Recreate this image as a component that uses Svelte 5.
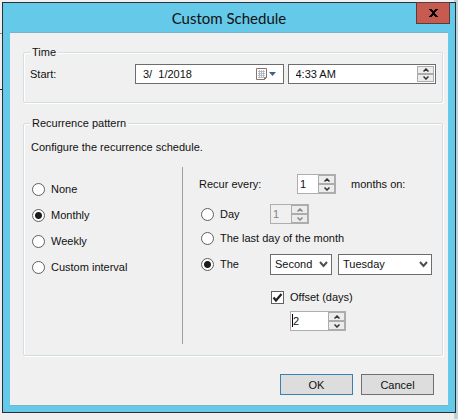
<script>
  let pattern = $state('Monthly');
  let rule = $state('the');
  let startDate = $state('3/  1/2018');
  let startTime = $state('4:33 AM');
  let months = $state('1');
  let day = $state('1');
  let offset = $state('2');
  let useOffset = $state(true);
  let week = $state('Second');
  let weekday = $state('Tuesday');

  const patterns = ['None', 'Monthly', 'Weekly', 'Custom interval'];
  const weeks = ['First', 'Second', 'Third', 'Fourth', 'Last'];
  const weekdays = ['Sunday', 'Monday', 'Tuesday', 'Wednesday', 'Thursday', 'Friday', 'Saturday'];

  const step = (value, by) => String(Math.max(0, Number(value) + by));
</script>

{#snippet arrows(up, down, disabled)}
  <span class="arrows">
    <button type="button" aria-label="Increase" {disabled} onclick={up}>
      <svg width="6" height="4" viewBox="0 0 6 4"><path d="M.5 3.5 3 1l2.500 2.500" /></svg>
    </button>
    <button type="button" aria-label="Decrease" {disabled} onclick={down}>
      <svg width="6" height="4" viewBox="0 0 6 4"><path d="M.5 .5 3 3 5.500 .5" /></svg>
    </button>
  </span>
{/snippet}

{#snippet chevron()}
  <svg class="chevron" width="9" height="7" viewBox="0 0 9 7"><path d="M1 1 4.500 5 8 1" /></svg>
{/snippet}

<main class="desktop">
  <div class="dialog" role="dialog" aria-labelledby="title">
    <header>
      <h1 id="title">Custom Schedule</h1>
      <button class="close" type="button" aria-label="Close">
        <svg width="9" height="8" viewBox="0 0 9 8"><path d="M0 0h3v1h1v1h1V1h1V0h3v1H8v1H7v1H6v2h1v1h1v1h1v1H6V7H5V6H4v1H3v1H0V7h1V6h1V5h1V3H2V2H1V1H0z" /></svg>
      </button>
    </header>

    <form class="client" onsubmit={(e) => e.preventDefault()}>
      <fieldset>
        <legend>Time</legend>
        <div class="time">
          <label for="start">Start:</label>
          <div class="field">
            <input id="start" type="text" bind:value={startDate} />
            <button class="calendar" type="button" aria-label="Open calendar">
              <svg width="20" height="12" viewBox="0 0 20 12">
                <path d="M.5.5h10v9l-2 2h-8z" fill="#fff" stroke="#85736f" />
                <path d="M2 3.500h7M2 5.500h7M2 7.500h7M2 9.500h5M3.500 2v8M5.500 2v8M7.500 2v8" stroke="#a9b0bb" stroke-width=".8" />
                <path d="M8.500 11.500v-2h2" fill="none" stroke="#85736f" />
                <path d="M13 4h7l-3.500 4z" fill="#405e8d" />
              </svg>
            </button>
          </div>
          <div class="field">
            <input type="text" aria-label="Start time" bind:value={startTime} />
            {@render arrows()}
          </div>
        </div>
      </fieldset>

      <fieldset class="recurrence">
        <legend>Recurrence pattern</legend>
        <p>Configure the recurrence schedule.</p>
        <div class="panels">
          <div class="patterns">
            {#each patterns as name}
              <label><input type="radio" name="pattern" value={name} bind:group={pattern} />{name}</label>
            {/each}
          </div>

          <div class="details">
            <div class="row">
              <label class="every" for="months">Recur every:</label>
              <span class="spinner">
                <input id="months" type="text" bind:value={months} />
                {@render arrows(() => (months = step(months, 1)), () => (months = step(months, -1)))}
              </span>
              <span class="unit">months on:</span>
            </div>
            <div class="row day">
              <label class="choice"><input type="radio" name="rule" value="day" bind:group={rule} />Day</label>
              <span class="spinner" class:off={rule !== 'day'}>
                <input type="text" aria-label="Day of the month" disabled={rule !== 'day'} bind:value={day} />
                {@render arrows(() => (day = step(day, 1)), () => (day = step(day, -1)), rule !== 'day')}
              </span>
            </div>
            <div class="row last">
              <label><input type="radio" name="rule" value="last" bind:group={rule} />The last day of the month</label>
            </div>
            <div class="row the">
              <label class="choice"><input type="radio" name="rule" value="the" bind:group={rule} />The</label>
              <span class="combo week">
                <select aria-label="Week" bind:value={week}>
                  {#each weeks as name}<option>{name}</option>{/each}
                </select>
                {@render chevron()}
              </span>
              <span class="combo weekday">
                <select aria-label="Weekday" bind:value={weekday}>
                  {#each weekdays as name}<option>{name}</option>{/each}
                </select>
                {@render chevron()}
              </span>
            </div>
            <div class="offset">
              <label class="check"><input type="checkbox" bind:checked={useOffset} />Offset (days)</label>
              <span class="spinner wide">
                <input type="text" aria-label="Offset in days" bind:value={offset} />
                <i class="caret"></i>
                {@render arrows(() => (offset = step(offset, 1)), () => (offset = step(offset, -1)))}
              </span>
            </div>
          </div>
        </div>
      </fieldset>

      <footer>
        <button class="default" type="submit">OK</button>
        <button type="button">Cancel</button>
      </footer>
    </form>
  </div>
</main>

<style>
  :global(body) {
    background: #efefef;
  }

  .desktop {
    padding: 2px 2px 6px;
    background:
      linear-gradient(#bfd3d8, #bfd3d8) right / 4px 100% no-repeat,
      linear-gradient(#8c8c8c, #8c8c8c) 0 33px / 2px 1px no-repeat,
      linear-gradient(#222, #222) 0 89px / 2px 1px no-repeat;
    font: 11px/16px "Liberation Sans", Arial, sans-serif;
    color: #111;
  }

  .dialog {
    border: 1px solid #2b2f33;
    background: #65c9ea;
    padding: 0 7px 6px;
  }

  header {
    position: relative;
    height: 29px;
  }

  h1 {
    margin: 0;
    text-align: center;
    font: 15px/30px Lato, "Open Sans", sans-serif;
  }

  .close {
    position: absolute;
    top: -1px;
    right: -2px;
    width: 34px;
    height: 22px;
    padding: 0;
    border: 1px solid #5a3a3f;
    background: #c75b50;
    display: grid;
    place-items: center;
  }

  .client {
    border: solid #7ab4c9;
    border-width: 1px 0;
    background: #f0f0f0;
    padding: 11px 5px 10px 13px;
  }

  fieldset {
    margin: 0;
    min-width: 0;
    padding: 4px 6px 18px;
    border: 1px solid #d3dde4;
    border-radius: 2px;
    box-shadow: 1px 1px #fff, inset 1px 1px #fff;
  }

  legend {
    padding: 0 2px;
    background: #f0f0f0;
  }

  .recurrence {
    margin-top: 12px;
    padding: 8px 6px 11px;
  }

  p {
    margin: 0 0 12px 1px;
  }

  input,
  select,
  button {
    font: inherit;
    color: inherit;
    box-sizing: border-box;
  }

  input[type='text'] {
    flex: 1;
    min-width: 0;
    height: 100%;
    padding: 0;
    border: 0;
    outline: 0;
    background: transparent;
    white-space: pre;
  }

  .time {
    display: grid;
    grid-template-columns: 101px minmax(0, 1fr) minmax(0, 1fr);
    column-gap: 4px;
    align-items: center;
  }

  .field {
    display: flex;
    align-items: center;
    box-sizing: border-box;
    height: 20px;
    padding: 1px 1px 1px 7px;
    border: 1px solid #6d6d6d;
    background: #fff;
  }

  .calendar {
    display: grid;
    padding: 0 6px 0 0;
    border: 0;
    background: none;
  }

  .arrows {
    display: flex;
    flex-direction: column;
    flex: none;
    width: 17px;
    height: 100%;
  }

  .arrows button {
    flex: 1;
    min-height: 0;
    padding: 0;
    border: 1px solid #acacac;
    background: #ececec;
    display: grid;
    place-items: center;
  }

  .arrows path {
    fill: none;
    stroke: #333;
    stroke-width: 1.5;
  }

  .off .arrows path {
    stroke: #888;
  }

  .panels {
    display: grid;
    grid-template-columns: 153px 1fr;
    min-height: 177px;
  }

  .patterns {
    display: flex;
    flex-direction: column;
    gap: 10px;
    padding: 14px 0 0 2px;
    border-right: 1px solid #a0a0a0;
  }

  .patterns label,
  .row label,
  .check {
    display: flex;
    align-items: center;
    gap: 6px;
    white-space: nowrap;
  }

  input[type='radio'] {
    appearance: none;
    width: 13px;
    height: 13px;
    margin: 0;
    border: 1px solid #606060;
    border-radius: 50%;
    background: #fff;
  }

  input[type='radio']:checked {
    background: radial-gradient(circle, #1c1c1c 3px, #fff 4px);
  }

  .details {
    padding: 7px 0 0 16px;
  }

  .row {
    display: flex;
    align-items: center;
    height: 20px;
  }

  .every {
    width: 98px;
  }

  .unit {
    margin-left: 15px;
  }

  .day {
    margin-top: 10px;
  }

  .last {
    margin-top: 4px;
  }

  .the {
    height: 22px;
    margin-top: 5px;
  }

  .day,
  .last,
  .the {
    padding-left: 2px;
  }

  .choice {
    width: 69px;
  }

  .spinner {
    position: relative;
    display: flex;
    box-sizing: border-box;
    width: 39px;
    height: 20px;
    padding-left: 2px;
    border: 1px solid #adadb3;
    background: #fff;
  }

  .off {
    background: #f0f0f0;
    color: #838383;
  }

  .wide {
    width: 56px;
    margin-left: 19px;
  }

  .caret {
    position: absolute;
    left: 1px;
    top: 2px;
    width: 1px;
    height: 13px;
    background: #000;
  }

  .combo {
    position: relative;
    display: block;
  }

  .week {
    width: 62px;
    margin-right: 6px;
  }

  .weekday {
    width: 94px;
  }

  select {
    appearance: none;
    display: block;
    width: 100%;
    height: 21px;
    padding: 0 0 0 4px;
    border: 1px solid #6d6d6d;
    border-radius: 0;
    background: #fff;
  }

  .chevron {
    position: absolute;
    right: 4px;
    top: 7px;
    pointer-events: none;
  }

  .chevron path {
    fill: none;
    stroke: #505050;
    stroke-width: 2;
  }

  .offset {
    display: flex;
    flex-direction: column;
    gap: 6px;
    margin: 14px 0 0 72px;
  }

  input[type='checkbox'] {
    appearance: none;
    width: 13px;
    height: 13px;
    margin: 0;
    border: 1px solid #606060;
    background: #fff;
  }

  input[type='checkbox']:checked {
    background: #fff url("data:image/svg+xml,%3Csvg xmlns='http://www.w3.org/2000/svg' viewBox='0 0 11 11'%3E%3Cpath d='M1.500 5.500 4 8.500 9.500 2' fill='none' stroke='%23222' stroke-width='2.200'/%3E%3C/svg%3E");
  }

  footer {
    display: flex;
    justify-content: flex-end;
    gap: 8px;
    margin-top: 18px;
    padding-right: 9px;
  }

  footer button {
    width: 73px;
    height: 21px;
    padding: 0;
    border: 1px solid #707070;
    background: #dddddd;
  }

  footer .default {
    border-color: #3c7fb1;
  }
</style>
